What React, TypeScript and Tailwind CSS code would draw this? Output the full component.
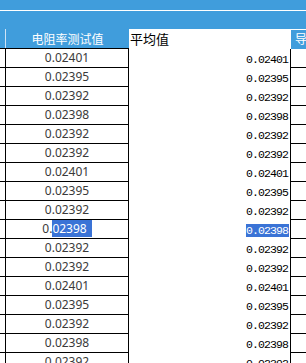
const values = [
  '0.02401',
  '0.02395',
  '0.02392',
  '0.02398',
  '0.02392',
  '0.02392',
  '0.02401',
  '0.02395',
  '0.02392',
  '0.02398',
  '0.02392',
  '0.02392',
  '0.02401',
  '0.02395',
  '0.02392',
  '0.02398',
  '0.02392',
];

const SELECTED = 9;

function Row({ value, selected }: { value: string; selected: boolean }) {
  return (
    <div className="flex h-[19px] shrink-0">
      {/* row marker column */}
      <div className="w-[6px] shrink-0 border-r border-b border-black" />

      {/* resistivity value */}
      <div className="w-[123px] shrink-0 border-r border-b border-black text-center text-[12px] leading-[18px] text-[#3a3a3a] font-['Noto_Sans',sans-serif]">
        {selected ? (
          <>
            0.<span className="bg-[#3a73d6] text-white pr-[5px]">{value.slice(2)}</span>
          </>
        ) : (
          value
        )}
      </div>

      {/* average column */}
      <div className="w-[161px] shrink-0 flex items-center justify-end pr-[1px] pt-[2px] text-[11.5px] leading-[13px] text-black font-['Liberation_Mono',monospace]">
        <span className={`tracking-[-0.9px] pr-[1px] ${selected ? 'bg-[#3a73d6] text-white' : ''}`}>{value}</span>
      </div>

      {/* next column */}
      <div className="flex-1 border-l border-b border-black" />
    </div>
  );
}

export default function App() {
  return (
    <div className="w-[306px] h-[363px] overflow-hidden bg-white flex flex-col">
      {/* Title bars */}
      <div className="h-[10px] shrink-0 bg-[#409ddc]" />
      <div className="h-px shrink-0 bg-white" />
      <div className="h-[18px] shrink-0 bg-[#409ddc]" />

      {/* Header row */}
      <div className="flex h-[20px] shrink-0 font-['Noto_Sans_CJK_SC',sans-serif]">
        <div className="w-[5px] shrink-0 bg-[#409ddc] border-b border-black" />
        <div className="w-px shrink-0 bg-[#cfe3f5] border-b border-black" />
        <div className="w-[123px] shrink-0 bg-[#409ddc] border-b border-black text-center text-[12px] leading-[19px] text-white">
          电阻率测试值
        </div>
        <div className="w-[162px] shrink-0 pl-[1px] pt-[1px] text-[13px] leading-[17px] text-black">
          平均值
        </div>
        <div className="flex-1 mt-px pl-[4px] bg-[#409ddc] text-[12px] leading-[18px] text-white overflow-hidden whitespace-nowrap">
          导
        </div>
      </div>

      {/* Data rows */}
      {values.map((v, i) => (
        <Row key={i} value={v} selected={i === SELECTED} />
      ))}
    </div>
  );
}
